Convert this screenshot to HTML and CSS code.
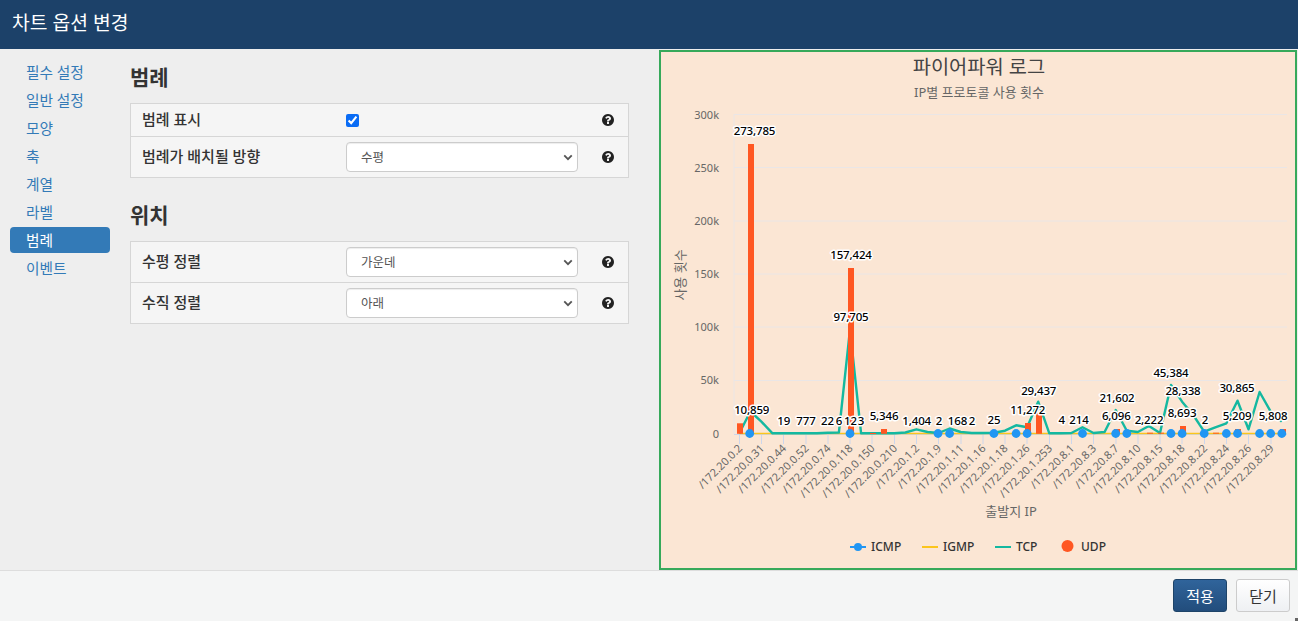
FILE: index.html
```html
<!DOCTYPE html>
<html lang="ko">
<head>
    <meta charset="UTF-8">
    <title>차트 옵션 변경</title>
    <link rel="stylesheet" href="styles.css">
</head>
<body>

<svg class="defs" width="0" height="0">
    <symbol id="help" viewBox="0 0 1792 1792">
        <path d="M1024 1376v-192q0-14-9-23t-23-9h-192q-14 0-23 9t-9 23v192q0 14 9 23t23 9h192q14 0 23-9t9-23zm256-672q0-88-55.5-163t-138.5-116-170-41q-243 0-371 213-15 24 8 42l132 100q7 6 19 6 16 0 25-12 53-68 86-92 34-24 86-24 48 0 85.5 26t37.5 59q0 38-20 61t-68 45q-63 28-115.5 86.5t-52.5 125.5v36q0 14 9 23t23 9h192q14 0 23-9t9-23q0-19 21.5-49.5t54.5-49.5q32-18 49-28.5t46-35 44.5-48 28-60.5 12.5-81zm384 192q0 209-103 385.5t-279.5 279.5-385.5 103-385.5-103-279.5-279.5-103-385.5 103-385.5 279.5-279.5 385.5-103 385.5 103 279.5 279.5 103 385.5z"/>
    </symbol>
    <symbol id="chevron" viewBox="0 0 12 8">
        <path d="M1.5 1.5 6 6l4.500-4.500" fill="none" stroke="#555" stroke-width="2.200"/>
    </symbol>
</svg>

<header class="modal-header">차트 옵션 변경</header>

<div class="modal-body">
    <nav class="side-nav">
        <a href="#">필수 설정</a>
        <a href="#">일반 설정</a>
        <a href="#">모양</a>
        <a href="#">축</a>
        <a href="#">계열</a>
        <a href="#">라벨</a>
        <a href="#" class="active">범례</a>
        <a href="#">이벤트</a>
    </nav>

    <section class="options">
        <h2>범례</h2>
        <div class="option-table">
            <div class="option-row short">
                <label>범례 표시</label>
                <div class="control"><input type="checkbox" checked></div>
                <svg class="help"><use href="#help"/></svg>
            </div>
            <div class="option-row">
                <label>범례가 배치될 방향</label>
                <div class="control select-wrap">
                    <select><option>수평</option></select>
                    <svg class="chevron"><use href="#chevron"/></svg>
                </div>
                <svg class="help"><use href="#help"/></svg>
            </div>
        </div>

        <h2 class="second">위치</h2>
        <div class="option-table">
            <div class="option-row">
                <label>수평 정렬</label>
                <div class="control select-wrap">
                    <select><option>가운데</option></select>
                    <svg class="chevron"><use href="#chevron"/></svg>
                </div>
                <svg class="help"><use href="#help"/></svg>
            </div>
            <div class="option-row">
                <label>수직 정렬</label>
                <div class="control select-wrap">
                    <select><option>아래</option></select>
                    <svg class="chevron"><use href="#chevron"/></svg>
                </div>
                <svg class="help"><use href="#help"/></svg>
            </div>
        </div>
    </section>

    <div class="chart-panel">
        <svg class="chart" viewBox="661 52 634 516" width="634" height="516">
            <text class="title" x="979" y="74">파이어파워 로그</text>
            <text class="subtitle" x="979" y="97">IP별 프로토콜 사용 횟수</text>

            <!-- grid -->
            <g class="grid">
                <path d="M734 114.5H1287M734 167.5H1287M734 221H1287M734 274H1287M734 327H1287M734 380.5H1287M734 114V434"/>
            </g>
            <path class="x-axis" d="M734 434.5H1287M739.5 434V444M761.5 434V444M783.5 434V444M806 434V444M828 434V444M850 434V444M872 434V444M894.5 434V444M916.5 434V444M938.5 434V444M961 434V444M983 434V444M1005 434V444M1027 434V444M1049.5 434V444M1071.5 434V444M1093.5 434V444M1116 434V444M1138 434V444M1160 434V444M1182 434V444M1204.5 434V444M1226.5 434V444M1248.5 434V444M1271 434V444"/>

            <g class="y-labels">
                <text x="719" y="119">300k</text>
                <text x="719" y="172">250k</text>
                <text x="719" y="225">200k</text>
                <text x="719" y="278">150k</text>
                <text x="719" y="331">100k</text>
                <text x="719" y="384">50k</text>
                <text x="719" y="438">0</text>
            </g>
            <text class="axis-title" transform="translate(685 275) rotate(-90)">사용 횟수</text>
            <text class="axis-title" x="1011" y="516">출발지 IP</text>

            <g class="x-labels">
                <text transform="translate(743 449) rotate(-45)">/172.20.0.2</text>
                <text transform="translate(765 449) rotate(-45)">/172.20.0.31</text>
                <text transform="translate(787 449) rotate(-45)">/172.20.0.44</text>
                <text transform="translate(809.500 449) rotate(-45)">/172.20.0.52</text>
                <text transform="translate(831.500 449) rotate(-45)">/172.20.0.74</text>
                <text transform="translate(853.500 449) rotate(-45)">/172.20.0.118</text>
                <text transform="translate(875.500 449) rotate(-45)">/172.20.0.150</text>
                <text transform="translate(898 449) rotate(-45)">/172.20.0.210</text>
                <text transform="translate(920 449) rotate(-45)">/172.20.1.2</text>
                <text transform="translate(942 449) rotate(-45)">/172.20.1.9</text>
                <text transform="translate(964.500 449) rotate(-45)">/172.20.1.11</text>
                <text transform="translate(986.500 449) rotate(-45)">/172.20.1.16</text>
                <text transform="translate(1008.500 449) rotate(-45)">/172.20.1.18</text>
                <text transform="translate(1030.500 449) rotate(-45)">/172.20.1.26</text>
                <text transform="translate(1053 449) rotate(-45)">/172.20.1.253</text>
                <text transform="translate(1075 449) rotate(-45)">/172.20.8.1</text>
                <text transform="translate(1097 449) rotate(-45)">/172.20.8.3</text>
                <text transform="translate(1119.500 449) rotate(-45)">/172.20.8.7</text>
                <text transform="translate(1141.500 449) rotate(-45)">/172.20.8.10</text>
                <text transform="translate(1163.500 449) rotate(-45)">/172.20.8.15</text>
                <text transform="translate(1185.500 449) rotate(-45)">/172.20.8.18</text>
                <text transform="translate(1208 449) rotate(-45)">/172.20.8.22</text>
                <text transform="translate(1230 449) rotate(-45)">/172.20.8.24</text>
                <text transform="translate(1252 449) rotate(-45)">/172.20.8.26</text>
                <text transform="translate(1274.500 449) rotate(-45)">/172.20.8.29</text>
            </g>

            <!-- IGMP -->
            <path class="igmp" d="M739.3 433.500H1281.8"/>
            <!-- TCP -->
            <polyline class="tcp" points="739.3,433.3 750.4,411.5 761.4,421.7 772.5,433.3 783.6,433.3 794.7,433.3 805.7,433.3 816.8,433.3 827.9,432.8 838.9,432.5 850,329.4 861.1,433.3 872.1,433.3 883.2,433.3 894.3,433.3 905.4,432.5 916.4,429.3 927.5,432 938.6,433 949.6,428.5 960.7,432 971.8,433 982.8,433 993.9,432.7 1005,430.7 1016.1,425.3 1027.1,427.3 1038.2,401.7 1049.3,433.3 1060.3,433.3 1071.4,433 1082.5,427.3 1093.5,433 1104.6,432 1115.7,410 1126.8,430.7 1137.8,432 1148.9,426 1160,433 1171,385 1182.1,401.7 1193.2,415 1204.2,431.700 1215.3,427.3 1226.4,423.3 1237.5,400.7 1248.5,429.3 1259.6,392 1270.7,411.7 1281.8,421.7"/>

            <!-- UDP bars -->
            <g class="udp">
                <rect x="737" y="423.300" width="6" height="10.500"/>
                <rect x="748" y="144" width="6" height="289.800"/>
                <rect x="848" y="268" width="6" height="165.800"/>
                <rect x="870" y="433" width="6" height="1"/>
                <rect x="881" y="429" width="6" height="4.800"/>
                <rect x="1025" y="423" width="6" height="10.800"/>
                <rect x="1036" y="413.300" width="6" height="20.500"/>
                <rect x="1114" y="429" width="6" height="4.800"/>
                <rect x="1147" y="432.700" width="6" height="1"/>
                <rect x="1158" y="432.700" width="6" height="1"/>
                <rect x="1180" y="426" width="6" height="7.800"/>
                <rect x="1213" y="432.700" width="6" height="1"/>
                <rect x="1224" y="431" width="6" height="2.800"/>
                <rect x="1235" y="429" width="6" height="4.800"/>
                <rect x="1280" y="429" width="6" height="4.800"/>
            </g>

            <!-- ICMP markers -->
            <g class="icmp">
                <circle cx="749.700" cy="433.500" r="4.400"/>
                <circle cx="850" cy="433.500" r="4.400"/>
                <circle cx="938" cy="433.500" r="4.400"/>
                <circle cx="949.600" cy="433.500" r="4.400"/>
                <circle cx="993.900" cy="433.500" r="4.400"/>
                <circle cx="1016.100" cy="433.500" r="4.400"/>
                <circle cx="1027.100" cy="433.500" r="4.400"/>
                <circle cx="1082.500" cy="433.500" r="4.400"/>
                <circle cx="1115.700" cy="433.500" r="4.400"/>
                <circle cx="1126.800" cy="433.500" r="4.400"/>
                <circle cx="1171" cy="433.500" r="4.400"/>
                <circle cx="1182.100" cy="433.500" r="4.400"/>
                <circle cx="1204.200" cy="433.500" r="4.400"/>
                <circle cx="1226.400" cy="433.500" r="4.400"/>
                <circle cx="1237.500" cy="433.500" r="4.400"/>
                <circle cx="1259.600" cy="433.500" r="4.400"/>
                <circle cx="1270.700" cy="433.500" r="4.400"/>
                <circle cx="1281.800" cy="433.500" r="4.400"/>
            </g>

            <!-- data labels -->
            <g class="data-labels">
                <text x="754.500" y="135">273,785</text>
                <text x="851" y="259">157,424</text>
                <text x="851" y="321">97,705</text>
                <text x="751.700" y="414">10,859</text>
                <text x="783.700" y="425">19</text>
                <text x="806" y="425">777</text>
                <text x="827.500" y="425">22</text>
                <text x="839" y="425">6</text>
                <text x="850.500" y="425">12</text>
                <text x="861" y="425">3</text>
                <text x="884" y="420">5,346</text>
                <text x="916.700" y="425">1,404</text>
                <text x="939" y="425">2</text>
                <text x="957.500" y="425">168</text>
                <text x="972" y="425">2</text>
                <text x="994" y="424">25</text>
                <text x="1027.700" y="414">11,272</text>
                <text x="1038.700" y="395">29,437</text>
                <text x="1061.700" y="424">4</text>
                <text x="1079" y="424">214</text>
                <text x="1117" y="401.700">21,602</text>
                <text x="1116.300" y="420">6,096</text>
                <text x="1149" y="424">2,222</text>
                <text x="1171" y="377">45,384</text>
                <text x="1183" y="395">28,338</text>
                <text x="1182" y="416.700">8,693</text>
                <text x="1205" y="424">2</text>
                <text x="1237" y="391.700">30,865</text>
                <text x="1237" y="420">5,209</text>
                <text x="1273" y="420">5,808</text>
            </g>

            <!-- legend -->
            <g class="legend">
                <path class="legend-icmp" d="M850 547H866"/>
                <circle class="icmp-dot" cx="858" cy="547" r="4"/>
                <text x="871" y="551">ICMP</text>
                <path class="legend-igmp" d="M922 547H938"/>
                <text x="943" y="551">IGMP</text>
                <path class="legend-tcp" d="M995 547H1011"/>
                <text x="1016" y="551">TCP</text>
                <circle class="udp-dot" cx="1067.500" cy="546" r="6"/>
                <text x="1081" y="551">UDP</text>
            </g>
        </svg>
    </div>
</div>

<footer class="modal-footer">
    <button class="btn btn-primary">적용</button>
    <button class="btn">닫기</button>
</footer>

</body>
</html>
```

FILE: styles.css
```css
* {
    box-sizing: border-box;
}

html, body {
    height: 100%;
}

body {
    margin: 0;
    display: flex;
    flex-direction: column;
    font-family: "Noto Sans", "Noto Sans CJK KR", sans-serif;
    font-size: 14px;
    color: #333;
    background-color: #eee;
    overflow: hidden;
}

.defs {
    position: absolute;
}

.modal-header {
    height: 49px;
    flex: none;
    padding-left: 12px;
    line-height: 45px;
    font-size: 19.3px;
    color: #fff;
    background-color: #1c4169;
}

.modal-body {
    flex: 1;
    display: flex;
    min-height: 0;
}

.side-nav {
    width: 120px;
    flex: none;
    padding: 10px 10px 0;
    display: flex;
    flex-direction: column;
    gap: 2px;
}

.side-nav a {
    height: 26px;
    line-height: 27px;
    padding-left: 16px;
    border-radius: 4px;
    font-size: 14.7px;
    color: #337ab7;
    text-decoration: none;
}

.side-nav a.active {
    color: #fff;
    background-color: #337ab7;
}

.options {
    width: 499px;
    flex: none;
    margin-left: 10px;
}

.options h2 {
    margin: 14px 0 12px;
    font-size: 21px;
    line-height: 28px;
    font-weight: 700;
}

.options h2.second {
    margin: 23px 0 12px;
}

.option-table {
    border: 1px solid #d6d6d6;
    background-color: #f5f5f5;
}

.option-row {
    height: 40px;
    display: flex;
    align-items: center;
    padding-left: 11px;
}

.option-row + .option-row {
    height: 41px;
    border-top: 1px solid #d6d6d6;
}

.option-row.short {
    height: 32px;
}

.option-row label {
    width: 204px;
    padding-bottom: 4px;
    font-size: 15px;
    font-weight: 500;
}

.control {
    width: 232px;
    display: flex;
    align-items: center;
}

.control input {
    width: 13px;
    height: 13px;
    margin: 0;
    accent-color: #0a6cf5;
}

.select-wrap {
    position: relative;
}

.select-wrap select {
    width: 100%;
    height: 30px;
    padding: 0 14px;
    appearance: none;
    font-family: inherit;
    font-size: 12.5px;
    color: #555;
    background-color: #fff;
    border: 1px solid #ccc;
    border-radius: 4px;
    box-shadow: inset 0 1px 1px rgba(0, 0, 0, 0.075);
}

.chevron {
    position: absolute;
    right: 5px;
    top: 12px;
    width: 10px;
    height: 7px;
    pointer-events: none;
}

.help {
    width: 14px;
    height: 14px;
    margin-left: 23px;
    fill: #222;
}

.chart-panel {
    width: 638px;
    flex: none;
    margin: 1px 1px 0 30px;
    border: 2px solid #36a95a;
    background-color: #fbe6d4;
}

.chart {
    display: block;
}

.chart text {
    font-family: "Noto Sans", "Noto Sans CJK KR", sans-serif;
}

.chart .title {
    font-size: 19.8px;
    fill: #444;
    text-anchor: middle;
}

.chart .subtitle {
    font-size: 13px;
    fill: #666;
    text-anchor: middle;
}

.grid path {
    fill: none;
    stroke: #eae6e6;
    stroke-width: 1;
}

.x-axis {
    fill: none;
    stroke: #ccd6eb;
    stroke-width: 1;
}

.y-labels text {
    font-size: 11px;
    fill: #666;
    text-anchor: end;
}

.axis-title {
    font-size: 13px;
    fill: #666;
    text-anchor: middle;
}

.x-labels text {
    font-size: 11px;
    fill: #666;
    text-anchor: end;
}

.tcp {
    fill: none;
    stroke: #14b8a0;
    stroke-width: 2.4;
    stroke-linejoin: round;
}

.igmp {
    fill: none;
    stroke: #fbc51c;
    stroke-width: 1.5;
}

.udp rect {
    fill: #ff5722;
}

.icmp circle {
    fill: #2196f3;
}

.data-labels text {
    font-size: 11.5px;
    font-weight: 500;
    letter-spacing: -0.15px;
    fill: #000;
    stroke: #fff;
    stroke-width: 3px;
    stroke-linejoin: round;
    paint-order: stroke;
    text-anchor: middle;
}

.legend text {
    font-size: 12px;
    font-weight: 500;
    fill: #333;
}

.legend path {
    fill: none;
    stroke-width: 2;
}

.legend-icmp {
    stroke: #2196f3;
}

.legend-igmp {
    stroke: #fbc51c;
}

.legend-tcp {
    stroke: #14b8a0;
}

.icmp-dot {
    fill: #2196f3;
}

.udp-dot {
    fill: #ff5722;
}

.modal-footer {
    position: relative;
    height: 51px;
    flex: none;
    display: flex;
    justify-content: flex-end;
    align-items: flex-start;
    gap: 9px;
    padding: 8px 8px 0 0;
    background-color: #f4f5f5;
    border-top: 1px solid #ddd;
}

/* resize grip in the corner */
.modal-footer::after {
    content: "";
    position: absolute;
    right: 0;
    bottom: 0;
    width: 3px;
    height: 3px;
    background-color: #666;
}

.btn {
    width: 54px;
    height: 33px;
    padding: 0;
    font-family: inherit;
    font-size: 15px;
    color: #333;
    background: linear-gradient(#fff, #eef0f3);
    border: 1px solid #ccc;
    border-radius: 3px;
}

.btn-primary {
    color: #fff;
    background: linear-gradient(#30649b, #224d7c);
    border-color: #1e4469;
}
```
